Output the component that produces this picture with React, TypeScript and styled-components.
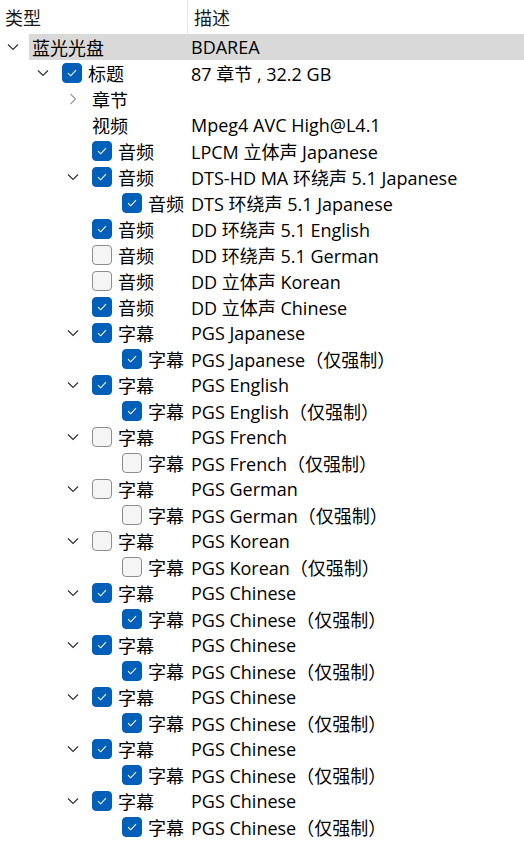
import React from 'react';
import styled, { createGlobalStyle } from 'styled-components';

const GlobalStyle = createGlobalStyle`
  html, body {
    margin: 0;
    padding: 0;
    background: #ffffff;
  }
  body {
    font-family: "Open Sans", "Noto Sans CJK SC", sans-serif;
    color: #000000;
  }
`;

const NAME_COL = 187;

const TreeView = styled.div`
  width: 524px;
  height: 843px;
  overflow: hidden;
  background: #ffffff;
  font-size: 18px;
`;

const Header = styled.div`
  display: grid;
  grid-template-columns: ${NAME_COL}px 1fr;
  height: 34px;
  align-items: stretch;
`;

const HeaderCell = styled.div<{ $divider?: boolean }>`
  display: flex;
  align-items: center;
  padding-left: ${p => (p.$divider ? 6 : 5)}px;
  border-left: ${p => (p.$divider ? '1px solid #e5e5e5' : 'none')};
  font-family: "Noto Sans CJK SC", sans-serif;
  color: #1a1a1a;
`;

const Row = styled.div`
  display: flex;
  height: 26px;
  align-items: stretch;
`;

const Indent = styled.div<{ $level: number }>`
  flex: none;
  width: ${p => p.$level * 30}px;
`;

const Expander = styled.div`
  flex: none;
  width: 29px;
  display: flex;
  align-items: center;
  justify-content: center;
  padding-right: 3px;
  box-sizing: border-box;
`;

const Item = styled.div<{ $selected?: boolean }>`
  flex: 1;
  display: flex;
  align-items: center;
  background: ${p => (p.$selected ? '#d9d9d9' : 'transparent')};
`;

const NameCell = styled.div<{ $level: number }>`
  flex: none;
  width: ${p => NAME_COL + 3 - 29 - p.$level * 30}px;
  display: flex;
  align-items: center;
  gap: 6px;
  padding-left: 3px;
  box-sizing: border-box;
  white-space: nowrap;
  font-family: "Noto Sans CJK SC", sans-serif;
`;

const ValueCell = styled.div`
  flex: 1;
  white-space: nowrap;
  padding-left: 1px;
`;

const Box = styled.span<{ $checked: boolean }>`
  flex: none;
  width: 20px;
  height: 20px;
  box-sizing: border-box;
  border-radius: 4px;
  display: inline-flex;
  align-items: center;
  justify-content: center;
  background: ${p => (p.$checked ? '#005fb8' : '#f5f5f5')};
  border: 1px solid ${p => (p.$checked ? '#005fb8' : '#8d8d8d')};
`;

const Cjk = styled.span`
  font-family: "Noto Sans CJK SC", sans-serif;
`;

type Node = {
  level: number;
  name: string;
  value?: string;
  check?: boolean;
  expander?: 'open' | 'closed';
  selected?: boolean;
};

const Chevron = ({ open }: { open: boolean }) =>
  open ? (
    <svg width="12" height="8" viewBox="0 0 12 8">
      <path d="M1 1.5 L6 6.5 L11 1.5" fill="none" stroke="#333" strokeWidth="1.2" />
    </svg>
  ) : (
    <svg width="8" height="12" viewBox="0 0 8 12">
      <path d="M1.5 1 L6.5 6 L1.5 11" fill="none" stroke="#9a9a9a" strokeWidth="1.2" />
    </svg>
  );

const CheckBox = ({ checked }: { checked: boolean }) => (
  <Box $checked={checked}>
    {checked && (
      <svg width="10" height="8" viewBox="0 0 10 8">
        <path d="M1 4.2 L3.7 6.8 L9 1.2" fill="none" stroke="#fff" strokeWidth="1.1" />
      </svg>
    )}
  </Box>
);

// value text: latin parts in the sans font, chinese parts in the CJK font
const Value = ({ text }: { text: string }) => {
  const parts = text.split(/([\u3000-\u9fff\uff00-\uffef]+)/);
  return (
    <>
      {parts.map((s, i) =>
        /[\u3000-\u9fff\uff00-\uffef]/.test(s) ? <Cjk key={i}>{s}</Cjk> : <span key={i}>{s}</span>
      )}
    </>
  );
};

const subtitles: [string, boolean][] = [
  ['PGS Japanese', true],
  ['PGS English', true],
  ['PGS French', false],
  ['PGS German', false],
  ['PGS Korean', false],
  ['PGS Chinese', true],
  ['PGS Chinese', true],
  ['PGS Chinese', true],
  ['PGS Chinese', true],
  ['PGS Chinese', true],
];

const nodes: Node[] = [
  { level: 0, name: '蓝光光盘', value: 'BDAREA', expander: 'open', selected: true },
  { level: 1, name: '标题', value: '87 章节 , 32.2 GB', check: true, expander: 'open' },
  { level: 2, name: '章节', expander: 'closed' },
  { level: 2, name: '视频', value: 'Mpeg4 AVC High@L4.1' },
  { level: 2, name: '音频', value: 'LPCM 立体声 Japanese', check: true },
  { level: 2, name: '音频', value: 'DTS-HD MA 环绕声 5.1 Japanese', check: true, expander: 'open' },
  { level: 3, name: '音频', value: 'DTS 环绕声 5.1 Japanese', check: true },
  { level: 2, name: '音频', value: 'DD 环绕声 5.1 English', check: true },
  { level: 2, name: '音频', value: 'DD 环绕声 5.1 German', check: false },
  { level: 2, name: '音频', value: 'DD 立体声 Korean', check: false },
  { level: 2, name: '音频', value: 'DD 立体声 Chinese', check: true },
  ...subtitles.flatMap(([v, c]): Node[] => [
    { level: 2, name: '字幕', value: v, check: c, expander: 'open' },
    { level: 3, name: '字幕', value: `${v}（仅强制）`, check: c },
  ]),
];

export default function App() {
  return (
    <>
      <GlobalStyle />
      <TreeView>
        <Header>
          <HeaderCell>类型</HeaderCell>
          <HeaderCell $divider>描述</HeaderCell>
        </Header>
        {nodes.map((n, i) => (
          <Row key={i}>
            <Indent $level={n.level} />
            <Expander>{n.expander && <Chevron open={n.expander === 'open'} />}</Expander>
            <Item $selected={n.selected}>
              <NameCell $level={n.level}>
                {n.check !== undefined && <CheckBox checked={n.check} />}
                {n.name}
              </NameCell>
              <ValueCell>{n.value && <Value text={n.value} />}</ValueCell>
            </Item>
          </Row>
        ))}
      </TreeView>
    </>
  );
}
